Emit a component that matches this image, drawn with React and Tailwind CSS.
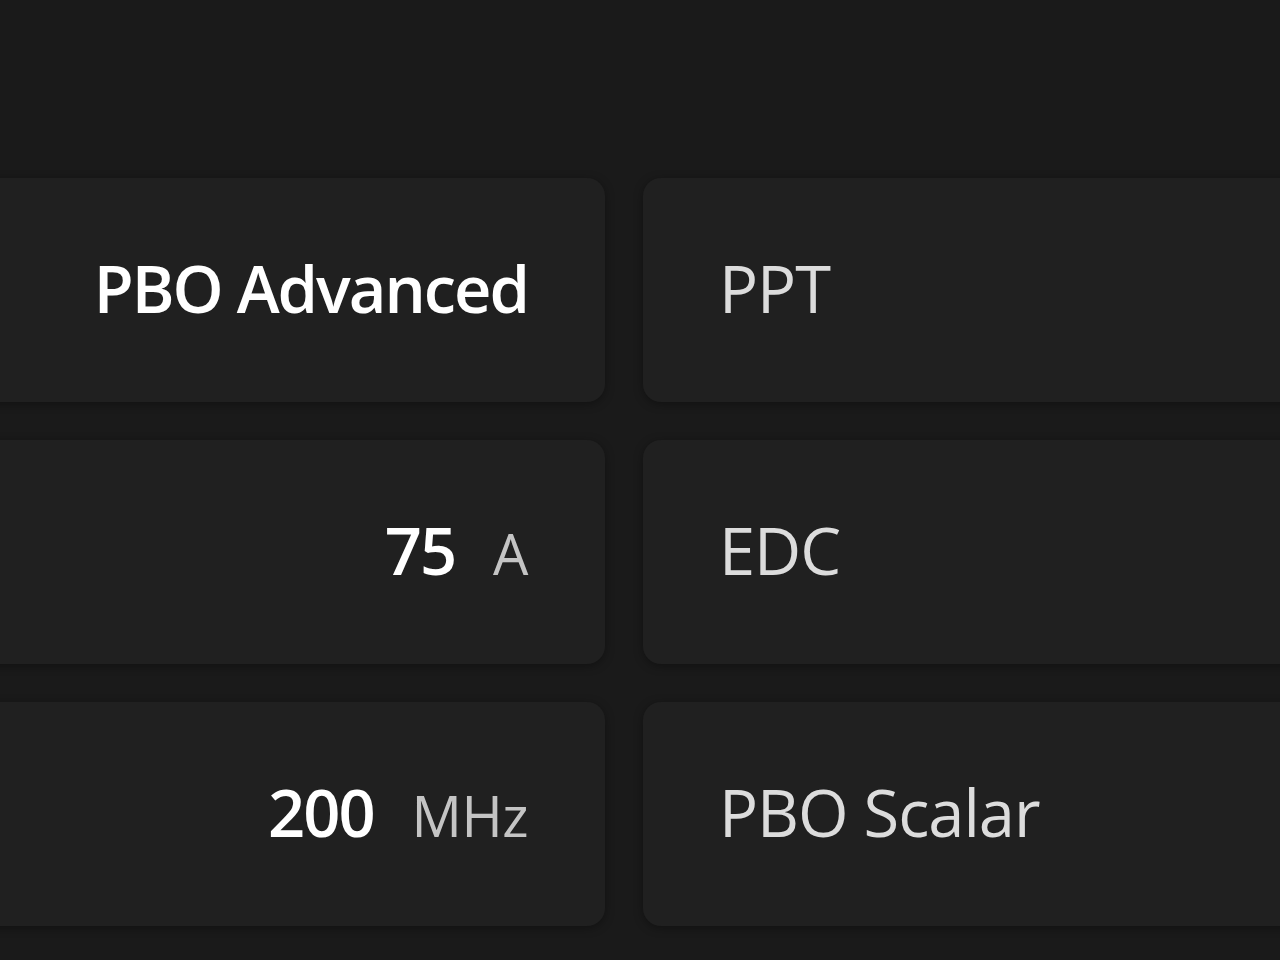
import React from "react";

const rows = [
  { left: { text: "PBO Advanced" }, right: "PPT" },
  { left: { value: "75", unit: "A" }, right: "EDC" },
  { left: { value: "200", unit: "MHz" }, right: "PBO Scalar" },
];

const card =
  "h-[224px] pb-[4px] rounded-[18px] bg-[#202020] shadow-[0_2px_10px_rgba(0,0,0,0.35)] flex items-center";

export default function App() {
  return (
    <div
      className="w-[1280px] h-[960px] overflow-hidden bg-[#1a1a1a]"
      style={{ fontFamily: '"Open Sans", "Noto Sans", sans-serif' }}
    >
      <div className="-ml-[60px] w-[1400px] pt-[178px] grid grid-cols-[665px_697px] gap-x-[38px] gap-y-[38px]">
        {rows.map((r, i) => (
          <React.Fragment key={i}>
            <div className={`${card} justify-end pr-[77px]`}>
              {r.left.text ? (
                <span className="text-[65px] font-semibold text-white tracking-[-2px] leading-none">
                  {r.left.text}
                </span>
              ) : (
                <span className="flex items-baseline gap-[38px] leading-none">
                  <span className="text-[65px] font-semibold text-white tracking-[-2px]">
                    {r.left.value}
                  </span>
                  <span className="text-[56px] font-medium text-[#c4c4c4] tracking-[-0.5px]">
                    {r.left.unit}
                  </span>
                </span>
              )}
            </div>
            <div className={`${card} pl-[76px]`}>
              <span className="text-[65px] font-medium text-[#dcdcdc] tracking-[-1px] leading-none">
                {r.right}
              </span>
            </div>
          </React.Fragment>
        ))}
      </div>
    </div>
  );
}
